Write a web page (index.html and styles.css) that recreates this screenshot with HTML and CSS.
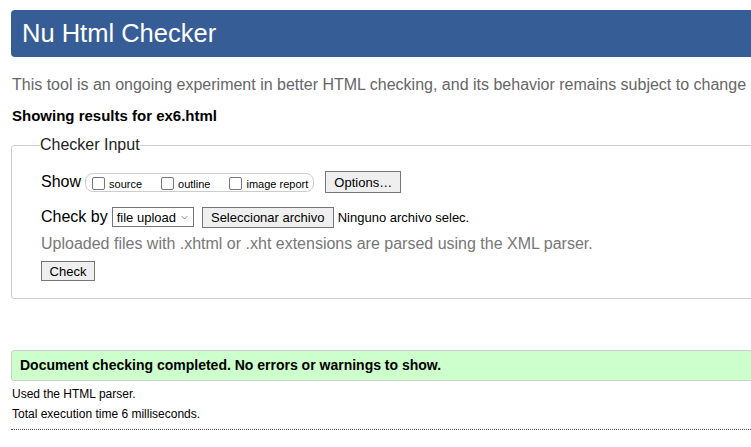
FILE: index.html
```html
<!DOCTYPE html>
<html>
<head>
<meta charset="utf-8">
<title>Nu Html Checker</title>
<link rel="stylesheet" href="styles.css">
</head>
<body>
<div class="page">
  <h1 class="title">Nu Html Checker</h1>
  <p class="intro">This tool is an ongoing experiment in better HTML checking, and its behavior remains subject to change</p>
  <p class="showing">Showing results for ex6.html</p>
  <fieldset class="input">
    <legend class="legend">Checker Input</legend>
    <div class="row show-row">
      <span class="lbl">Show</span>
      <span class="pill">
        <label class="opt"><input type="checkbox" class="cb"><span>source</span></label>
        <label class="opt"><input type="checkbox" class="cb"><span>outline</span></label>
        <label class="opt"><input type="checkbox" class="cb"><span>image report</span></label>
      </span>
      <button class="btn options">Options…</button>
    </div>
    <div class="row check-row">
      <span class="lbl">Check by</span>
      <span class="select"><span class="sel-text">file upload</span><svg class="chev" width="7" height="5" viewBox="0 0 7 5"><path d="M0.5 1l3 3 3-3" fill="none" stroke="#888" stroke-width="1"/></svg></span>
      <button class="btn file">Seleccionar archivo</button>
      <span class="nofile">Ninguno archivo selec.</span>
    </div>
    <p class="note">Uploaded files with .xhtml or .xht extensions are parsed using the XML parser.</p>
    <button class="btn check">Check</button>
  </fieldset>
  <div class="success">Document checking completed. No errors or warnings to show.</div>
  <p class="small first">Used the HTML parser.</p>
  <p class="small">Total execution time 6 milliseconds.</p>
  <div class="dots"></div>
</div>
</body>
</html>
```
FILE: styles.css
```css
html, body { margin: 0; padding: 0; background: #fff; overflow: hidden; }
body { font-family: "Liberation Sans", Arial, sans-serif; color: #000; }
.page { margin: 10px 0 0 11px; width: 760px; }
.title {
  margin: 0; height: 47px; box-sizing: border-box;
  background: #365d95; color: #fff; font-weight: normal;
  font-size: 25.5px; line-height: 47px; padding-left: 11px;
  border-radius: 4px 0 0 4px;
}
.intro { margin: 18px 0 0 1px; font-size: 16px; line-height: 19px; color: #666; white-space: nowrap; }
.showing { margin: 13px 0 0 1px; font-size: 15px; line-height: 18px; font-weight: bold; }
.input {
  margin: 11px 0 0 0; border: 1px solid #ccc; border-radius: 3px;
  padding: 10px 0 16px 29px; height: 163px; box-sizing: border-box;
}
.legend { font-size: 16px; padding: 0; margin-left: -1px; color: #222; }
.row { display: flex; align-items: center; }
.lbl { font-size: 16px; margin-right: 4px; }
.show-row { margin-top: 7px; height: 22px; }
.pill {
  display: inline-flex; align-items: center; height: 19px; box-sizing: border-box;
  border: 1px solid #ccc; border-radius: 8px; padding: 2px 5px 0 6px;
}
.opt { display: inline-flex; align-items: center; font-size: 11px; margin-right: 19px; }
.opt:last-child { margin-right: 0; }
.opt span { position: relative; top: 1px; }
.cb {
  appearance: none; -webkit-appearance: none; margin: 0 4px 0 0; width: 13px; height: 13px;
  border: 1px solid #767676; border-radius: 2px; background: #fff; box-sizing: border-box;
}
.btn {
  font-family: "Liberation Sans", Arial, sans-serif; font-size: 13px; color: #000;
  background: #efefef; border: 1px solid #767676; border-radius: 0; padding: 0 6px; height: 21px;
}
.options { margin-left: 11px; width: 76px; height: 22px; }
.check-row { margin-top: 13px; height: 22px; }
.check-row .lbl { margin-right: 4px; }
.select {
  display: inline-flex; align-items: center; box-sizing: border-box; height: 20px;
  border: 1px solid #767676; font-size: 13px; padding: 0 0 0 4px; width: 82px; white-space: nowrap;
}
.chev { margin-left: 5px; }
.file { margin-left: 8px; width: 132px; height: 21px; }
.nofile { font-size: 13px; margin-left: 4px; }
.note { margin: 6px 0 0 0; font-size: 16px; line-height: 19px; color: #777; }
.check { margin-top: 8px; width: 54px; height: 20px; padding: 0; font-size: 13px; }
.success {
  margin-top: 51px; height: 31px; box-sizing: border-box;
  background: #ccffcc; border: 1px solid #ccc; border-radius: 3px 0 0 3px;
  font-size: 14px; font-weight: bold; line-height: 29px; padding-left: 8px;
}
.small { margin: 0; font-size: 12px; line-height: 20px; padding-left: 1px; }
.small.first { margin-top: 3px; }
.dots { margin-top: 5px; border-top: 1px dotted #555; width: 740px; }
```
